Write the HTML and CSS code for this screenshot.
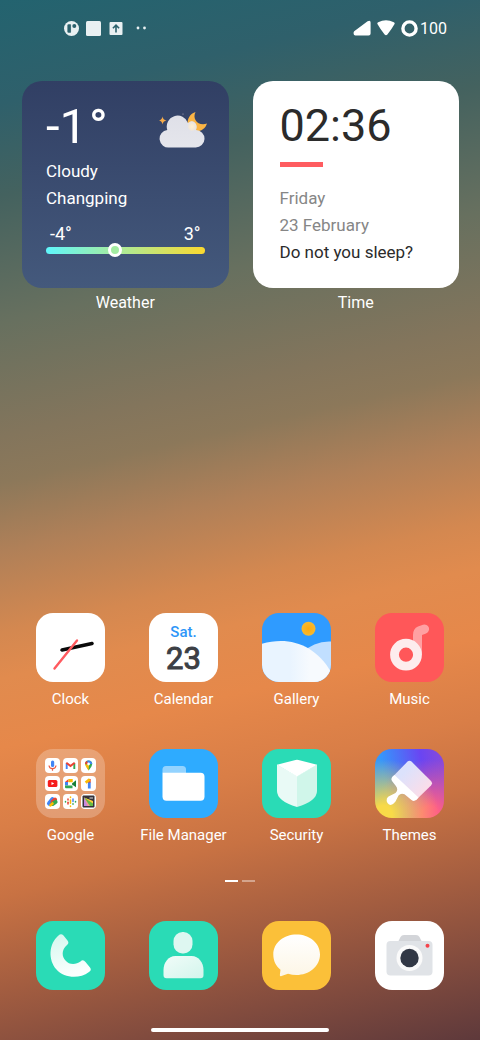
FILE: index.html
```html
<!DOCTYPE html>
<html lang="en">
  <head>
    <meta charset="UTF-8" />
    <meta name="viewport" content="width=device-width, initial-scale=1.0" />
    <title>Home Screen</title>
    <link rel="stylesheet" href="styles.css">
  </head>
  <body>
    <header class="status-bar">
      <div class="status-group notifications">
        <svg width="15" height="15" viewBox="0 0 15 15">
          <circle cx="7.5" cy="7.5" r="7.5" fill="#e9f0f2" />
          <rect x="3.4" y="3.2" width="4" height="8.6" rx="1.2" fill="#2b616c" />
          <circle cx="10.3" cy="5" r="2" fill="#2b616c" />
          <path d="M7.4 3v9" stroke="#e9f0f2" stroke-width="1" />
        </svg>
        <svg width="15" height="15" viewBox="0 0 15 15">
          <rect width="15" height="15" rx="1.5" fill="#e9f0f2" />
        </svg>
        <svg width="15" height="15" viewBox="0 0 15 15">
          <rect x="1.500" y="1" width="13" height="13" rx="1" fill="#e9f0f2" />
          <path d="M8 11.4V4.6M4.9 7.3l3.1-3.1 3.1 3.1" fill="none" stroke="#2b616c" stroke-width="1.6" />
        </svg>
        <svg width="17" height="15" viewBox="0 0 17 15">
          <circle cx="8" cy="7" r="1.4" fill="#e9f0f2" />
          <circle cx="14.500" cy="7" r="1.4" fill="#e9f0f2" />
        </svg>
      </div>
      <div class="status-group signal">
        <svg width="18" height="16" viewBox="0 0 18 16">
          <path d="M1.2 11.2L14.6 1.2Q17.6-.4 17.6 2.6V13.6Q17.6 15.5 15.6 15.5H2.4Q.6 15.5.6 13.4Q.5 12 1.2 11.2Z" fill="#fff" />
        </svg>
        <svg width="18" height="16" viewBox="0 0 18 16">
          <path d="M.6 4.2Q-.2 3 1.2 2.2Q9-1.8 16.8 2.2Q18.2 3 17.4 4.2Q15 8.6 10.4 14.4Q9 16 7.6 14.4Q3 8.6.6 4.2Z" fill="#fff" />
        </svg>
        <svg width="17" height="17" viewBox="0 0 17 17">
          <circle cx="8.5" cy="8.5" r="6.600" fill="none" stroke="#fff" stroke-width="3.4" />
        </svg>
        <span class="battery">100</span>
      </div>
    </header>

    <main class="home">
      <section class="widgets">
        <div class="widget-slot">
          <div class="widget weather">
            <div class="weather-top">
              <div class="temperature">-1<span class="degree">°</span></div>
              <svg class="weather-icon" width="48" height="38" viewBox="0 0 48 38">
                <defs>
                  <linearGradient id="cloud" x1="0" y1="0" x2="0" y2="1">
                    <stop offset="0" stop-color="#dfe0e8" />
                    <stop offset="1" stop-color="#e5e6ec" />
                  </linearGradient>
                  <radialGradient id="glow">
                    <stop offset="0" stop-color="#fff0d0" />
                    <stop offset=".6" stop-color="#f5e8d5" />
                    <stop offset="1" stop-color="#e2e3e9" />
                  </radialGradient>
                </defs>
                <path d="M36.5 1C33 8 39 15.500 48 12.600C46 19 40 21.500 34.500 20C26 17 27 4 36.500 1Z" fill="#fbb545" />
                <path d="M3.500 5.500Q4 9 7.500 9.500Q4 10 3.500 13.500Q3 10-.5 9.500Q3 9 3.500 5.500Z" fill="#f7ab4a" />
                <circle cx="24" cy="3" r=".6" fill="#aab" />
                <path d="M10.500 36.500A8.700 8.700 0 0 1 8.300 19A10.800 10.800 0 0 1 29 12Q33 8.500 36 12Q38.500 15 37 19A8.700 8.700 0 0 1 36.500 36.500Z" fill="url(#cloud)" />
                <ellipse cx="33" cy="15.500" rx="4.500" ry="5" fill="url(#glow)" />
              </svg>
            </div>
            <p>Cloudy</p>
            <p>Changping</p>
            <div class="range-labels">
              <span>-4°</span>
              <span>3°</span>
            </div>
            <div class="range-bar"><span class="range-dot"></span></div>
          </div>
          <span class="label widget-label">Weather</span>
        </div>
        <div class="widget-slot">
          <div class="widget time">
            <div class="clock-time">02:36</div>
            <div class="accent"></div>
            <p class="muted">Friday</p>
            <p class="muted">23 February</p>
            <p>Do not you sleep?</p>
          </div>
          <span class="label widget-label">Time</span>
        </div>
      </section>

      <nav class="apps">
        <a href="#" class="app">
          <svg class="icon white" viewBox="0 0 69 69">
            <path d="M26 37L56 30.500" stroke="#0a0a0a" stroke-width="3.400" stroke-linecap="round" />
            <path d="M41 27.500L18.500 55.500" stroke="#ff5a5f" stroke-width="2.400" stroke-linecap="round" />
          </svg>
          <span class="label">Clock</span>
        </a>
        <a href="#" class="app">
          <span class="icon white calendar"><span class="weekday">Sat.</span><span class="date">23</span></span>
          <span class="label">Calendar</span>
        </a>
        <a href="#" class="app">
          <svg class="icon" viewBox="0 0 69 69">
            <defs>
              <linearGradient id="hill" x1="0" y1="0" x2="1" y2="0">
                <stop offset=".4" stop-color="#e9f4ff" />
                <stop offset=".7" stop-color="#f7fafe" />
              </linearGradient>
              <radialGradient id="sun">
                <stop offset="0" stop-color="#ffaa0c" />
                <stop offset="1" stop-color="#f5b931" />
              </radialGradient>
            </defs>
            <rect width="69" height="69" fill="#2f9bff" />
            <circle cx="46.500" cy="15.800" r="7" fill="url(#sun)" />
            <circle cx="67" cy="66.500" r="38" fill="#c1dfff" />
            <path d="M0 30.800C27 23 53 31.500 69 59V69H0Z" fill="url(#hill)" />
          </svg>
          <span class="label">Gallery</span>
        </a>
        <a href="#" class="app">
          <svg class="icon music" viewBox="0 0 69 69">
            <path d="M38 42V22Q38 15.500 43 13.500L48 11.700A4.600 4.600 0 0 1 51 20.400L47 22V42Z" fill="#ffa0a2" />
            <circle cx="31" cy="41.700" r="11.500" fill="none" stroke="#fdeced" stroke-width="8.800" />
          </svg>
          <span class="label">Music</span>
        </a>
        <a href="#" class="app">
          <span class="icon folder">
            <svg viewBox="0 0 15 15">
              <rect x="6" y="2.500" width="3.200" height="6.500" rx="1.600" fill="#4285f4" />
              <path d="M4 7.500Q4.300 10.600 7.500 10.700Q10.700 10.600 11 7.500" fill="none" stroke="#ea5b45" stroke-width="1.200" />
              <path d="M7.500 10.700v2" stroke="#ea5b45" stroke-width="1.200" />
            </svg>
            <svg viewBox="0 0 15 15">
              <path d="M3.700 11V5.200" stroke="#4285f4" stroke-width="1.900" />
              <path d="M11.300 11V5.200" stroke="#34a853" stroke-width="1.900" />
              <path d="M3.300 4.700L7.500 8L11.700 4.700" fill="none" stroke="#ea4335" stroke-width="2" />
            </svg>
            <svg viewBox="0 0 15 15">
              <path d="M4 6A3.600 3.600 0 0 1 11.200 6Q11 8.500 7.600 12.500" fill="#34a853" />
              <path d="M7.600 12.500Q4.500 8.600 4 6L8 7Z" fill="#fbbc04" />
              <path d="M4 6A3.600 3.600 0 0 1 6 2.800L7.500 6Z" fill="#ea4335" />
              <path d="M6 2.800A3.600 3.600 0 0 1 11.200 6L7.500 6Z" fill="#4285f4" />
              <circle cx="7.600" cy="6" r="1.400" fill="#fff" />
            </svg>
            <svg viewBox="0 0 15 15">
              <rect x="2.800" y="4" width="9.600" height="7" rx="1.500" fill="#f51c1c" />
              <path d="M6.500 5.900v3.200l2.700-1.600Z" fill="#fff" />
            </svg>
            <svg viewBox="0 0 15 15">
              <path d="M2 6L5.500 3V6Z" fill="#ea4335" />
              <path d="M2 6H5V9.500H2Z" fill="#4285f4" />
              <path d="M2 9.500H9.500V12.200H3Q2 12.200 2 11Z" fill="#34a853" />
              <path d="M5.500 3H9.700V6.200H5.500Z" fill="#fbbc04" />
              <path d="M9 7.500L13 4.200V11.300L9 8.500Z" fill="#188038" />
            </svg>
            <svg viewBox="0 0 15 15">
              <path d="M8.300 6V12.500" stroke="#4285f4" stroke-width="2.800" />
              <path d="M8.300 3V6.500" stroke="#ea4335" stroke-width="2.800" />
              <path d="M4.600 6.600L8.800 3.400" stroke="#fbbc04" stroke-width="2.600" />
            </svg>
            <svg viewBox="0 0 15 15">
              <path d="M4.300 9.500L7.500 5.500" stroke="#4285f4" stroke-width="4.600" stroke-linecap="round" />
              <path d="M7.500 8L10 5.500" stroke="#ea4335" stroke-width="4" stroke-linecap="round" />
              <path d="M7.500 10L10.600 7.800" stroke="#34a853" stroke-width="4" stroke-linecap="round" />
              <path d="M5.500 11.300L7.500 9.500" stroke="#fbbc04" stroke-width="2.600" stroke-linecap="round" />
            </svg>
            <svg viewBox="0 0 15 15" stroke-width="1.500" stroke-linecap="round">
              <path d="M2.500 7.500v.4M12.500 7.500v.4" stroke="#34a853" />
              <path d="M5 5v1" stroke="#ea4335" />
              <path d="M5 8.300v1.800" stroke="#ea4335" />
              <path d="M7.500 3v.4M7.500 6v3.200M7.500 12v.4" stroke="#fbbc04" />
              <path d="M10 5v2.400" stroke="#4285f4" />
              <path d="M10 9.800v.4" stroke="#34a853" />
            </svg>
            <svg viewBox="0 0 15 15">
              <rect x="1.500" y="1.500" width="12" height="12" rx="1" fill="#35323a" />
              <path d="M3 3.500L12 7.500V12H6Z" fill="#66bb44" />
              <path d="M3 3.500L12 7V9.500Z" fill="#ffca3a" />
              <path d="M3 3.500L9 12H5Z" fill="#f29a9a" />
              <path d="M3 3.500L6.500 12H3Z" fill="#c58ae0" />
              <path d="M8.500 4H12" stroke="#ddd" />
            </svg>
          </span>
          <span class="label">Google</span>
        </a>
        <a href="#" class="app">
          <svg class="icon files" viewBox="0 0 69 69">
            <path d="M13.500 24V20.500Q13.500 17 17 17H33.500Q37 17 37 20.500V24Z" fill="#93d3ff" />
            <path d="M13.500 23.700H51.500Q55.500 23.700 55.500 27.700V47.500Q55.500 51.700 51.500 51.700H17.500Q13.500 51.700 13.500 47.500Z" fill="#fff" />
          </svg>
          <span class="label">File Manager</span>
        </a>
        <a href="#" class="app">
          <svg class="icon green" viewBox="0 0 69 69">
            <path d="M15 15.500L35 27V58Q15 52 15 42Z" fill="#e9faf6" />
            <path d="M55 15.500L35 27V58Q55 52 55 42Z" fill="#d0f6ea" />
            <path d="M15 15.700L33.500 11Q35 10.700 36.500 11L55 15.700L35 27.500Z" fill="#fff" />
          </svg>
          <span class="label">Security</span>
        </a>
        <a href="#" class="app">
          <svg class="icon themes" viewBox="0 0 69 69">
            <defs>
              <linearGradient id="brush" x1="0" y1="0" x2="1" y2="1">
                <stop offset=".3" stop-color="#dce2fc" />
                <stop offset=".8" stop-color="#fbdde9" />
              </linearGradient>
            </defs>
            <path d="M32.500 12.600Q34.500 10.800 36.500 12.600L56 32Q58 34.300 56 36.500L41 51L17 28.500Z" fill="url(#brush)" />
            <path d="M19.500 26L43.500 48.500Q40 53.600 36.500 51L29.500 45.300Q26 43.500 23.500 46.500L20.500 52.500Q16 58.500 12.500 54Q9.800 49 15.500 46.600L20.500 44Q24 40.500 20.500 36.500L17 32Q15 29 19.500 26Z" fill="#fff" />
          </svg>
          <span class="label">Themes</span>
        </a>
      </nav>

      <div class="pager"><span class="current"></span><span></span></div>

      <nav class="apps dock">
        <a href="#" class="app" aria-label="Phone">
          <svg class="icon green" viewBox="0 0 69 69">
            <defs>
              <linearGradient id="soft" x1="0" y1="0" x2=".3" y2="1">
                <stop offset="0" stop-color="#d4f7ee" />
                <stop offset="1" stop-color="#fbfffe" />
              </linearGradient>
            </defs>
            <path d="M22.500 14.500Q25 12 27.500 14.500L31.500 19.500Q33.500 22 31 24C25 29 26 36 29.500 39.500C33 44 40 44 44.500 40.500Q47 38 49.500 41L54 46.500Q56 49 53 51C43 58.500 28 57 20.500 48.500C12 39 12.500 23 22.500 14.500Z" fill="url(#soft)" />
          </svg>
        </a>
        <a href="#" class="app" aria-label="Contacts">
          <svg class="icon green" viewBox="0 0 69 69">
            <defs>
              <linearGradient id="body" x1="0" y1="0" x2="1" y2="1">
                <stop offset="0" stop-color="#f1fcf9" />
                <stop offset="1" stop-color="#d3f5ec" />
              </linearGradient>
            </defs>
            <rect x="24.500" y="11" width="19" height="21.500" rx="9" fill="#def7f1" />
            <path d="M26.500 35H42.500C50 35 54.500 42 54.500 49V54Q54.500 57.200 51.500 57.200H17.500Q14.500 57.200 14.500 54V49C14.500 42 19 35 26.500 35Z" fill="url(#body)" />
          </svg>
        </a>
        <a href="#" class="app" aria-label="Messages">
          <svg class="icon messages" viewBox="0 0 69 69">
            <defs>
              <linearGradient id="bubble" x1="0" y1="0" x2="0" y2="1">
                <stop offset="0" stop-color="#fff" />
                <stop offset="1" stop-color="#fdf6e6" />
              </linearGradient>
            </defs>
            <path d="M34.500 13.500C47 13.500 58 21.500 58 33.500C58 45.500 47 54 34.500 54Q30 54 26 52.800L19.500 55Q17.500 55.700 17.900 53.500L18.500 48.700C14 45 11.300 40 11.300 33.500C11.300 21.500 22 13.500 34.500 13.500Z" fill="url(#bubble)" />
          </svg>
        </a>
        <a href="#" class="app" aria-label="Camera">
          <svg class="icon white" viewBox="0 0 69 69">
            <path d="M23 21L25.500 16Q26.500 14 29 14H41Q43.500 14 44.500 16L47 21Z" fill="#d3d5d9" />
            <rect x="11.500" y="20" width="46" height="34.500" rx="4" fill="#e0e3e7" />
            <circle cx="34.500" cy="37" r="13" fill="#fafafa" />
            <circle cx="34.500" cy="37" r="9.200" fill="#323845" />
            <circle cx="52.500" cy="24.700" r="2" fill="#f5444c" />
          </svg>
        </a>
      </nav>
    </main>
    <div class="home-indicator"></div>
  </body>
</html>
```

FILE: styles.css
```css
* {
  margin: 0;
  padding: 0;
  box-sizing: border-box;
}

body {
  font-family: Roboto, sans-serif;
  min-height: 100vh;
  display: flex;
  flex-direction: column;
  color: #fff;
  background: linear-gradient(
    167deg,
    #23636f 0%,
    #2f606b 9%,
    #44625f 17%,
    #67705f 28%,
    #83755c 38%,
    #8c785a 42%,
    #b08058 48%,
    #d48850 55%,
    #e18b4e 59%,
    #e6884a 65%,
    #d97e47 72%,
    #c87243 78%,
    #a35d40 86%,
    #814b3e 93%,
    #5e393b 100%
  );
}

svg {
  display: block;
}

.status-bar {
  display: flex;
  justify-content: space-between;
  align-items: center;
  height: 56px;
  padding: 0 33px 0 64px;
}

.status-group {
  display: flex;
  align-items: center;
}

.notifications {
  gap: 7px;
}

.signal {
  gap: 6px;
}

.battery {
  margin-left: -4px;
  font-size: 16px;
}

.home {
  flex: 1;
  display: flex;
  flex-direction: column;
  padding-top: 25px;
}

.widgets {
  display: grid;
  grid-template-columns: 1fr 1fr;
  gap: 24px;
  padding: 0 21px 0 22px;
  margin-bottom: auto;
}

.widget-slot {
  display: flex;
  flex-direction: column;
  gap: 5px;
}

.label {
  font-size: 15px;
  line-height: 20px;
  text-align: center;
  white-space: nowrap;
}

.widget-label {
  font-size: 16px;
}

.widget {
  aspect-ratio: 1;
  border-radius: 20px;
  font-size: 17px;
  line-height: 27px;
}

.weather {
  padding: 15px 24px;
  background: linear-gradient(#313f64, #44597c);
}

.weather-top {
  display: flex;
  justify-content: space-between;
  align-items: center;
  height: 62px;
  margin-right: -2px;
}

.weather-icon {
  margin-top: 6px;
}

.temperature {
  font-size: 49px;
  line-height: 60px;
}

.degree {
  margin-left: 2px;
  font-weight: 500;
}

.range-labels {
  display: flex;
  justify-content: space-between;
  padding: 8px 4px 0;
  font-size: 18px;
}

.range-bar {
  position: relative;
  height: 7px;
  border-radius: 4px;
  background: linear-gradient(90deg, #5ff6fb, #a6eca0 43%, #fbd92f);
}

.range-dot {
  position: absolute;
  top: -4px;
  left: 39%;
  width: 14px;
  height: 14px;
  border: 3px solid #fff;
  border-radius: 50%;
  background: #a3eda2;
}

.time {
  padding: 15px 27px;
  background: #fff;
  color: #2b2b2b;
}

.clock-time {
  font-size: 45px;
  line-height: 60px;
  white-space: nowrap;
}

.accent {
  width: 43px;
  height: 5px;
  margin: 6px 0 18px;
  background: #ff5c60;
}

.muted {
  color: #868686;
}

.apps {
  display: grid;
  grid-template-columns: repeat(4, 1fr);
  row-gap: 40px;
  padding: 0 14px;
}

.app {
  display: flex;
  flex-direction: column;
  align-items: center;
  gap: 7px;
  color: #fff;
  text-decoration: none;
}

.icon {
  width: 69px;
  height: 69px;
  border-radius: 17px;
  overflow: hidden;
}

.white {
  background: #fff;
}

.green {
  background: #2adbb6;
}

.music {
  background: #ff5759;
}

.files {
  background: #2eabff;
}

.messages {
  background: #fbc039;
}

.themes {
  background:
    radial-gradient(circle at 12% 95%, #f8da48 10%, transparent 62%),
    radial-gradient(circle at 80% 95%, #ff5f86 10%, transparent 65%),
    linear-gradient(80deg, #3597fb 20%, #6a45f2 70%, #8a4ad8);
}

.calendar {
  display: flex;
  flex-direction: column;
  align-items: center;
  padding-top: 10px;
}

.weekday {
  font-size: 15px;
  line-height: 18px;
  font-weight: 500;
  color: #2e96f8;
}

.date {
  font-size: 31px;
  line-height: 35px;
  color: #3c3f45;
  -webkit-text-stroke: 1px #3c3f45;
}

.folder {
  display: grid;
  grid-template-columns: repeat(3, 15px);
  gap: 3px;
  place-content: center;
  background: rgba(255, 255, 255, 0.24);
}

.folder svg {
  width: 15px;
  height: 15px;
  border-radius: 4px;
  background: #fff;
}

.pager {
  display: flex;
  justify-content: center;
  gap: 4px;
  margin: 35px 0 39px;
}

.pager span {
  width: 13px;
  height: 2px;
  background: rgba(255, 255, 255, 0.4);
}

.pager .current {
  background: #fff;
}

.home-indicator {
  width: 37%;
  height: 4px;
  margin: 38px auto 8px;
  border-radius: 2px;
  background: #fff;
}
```
